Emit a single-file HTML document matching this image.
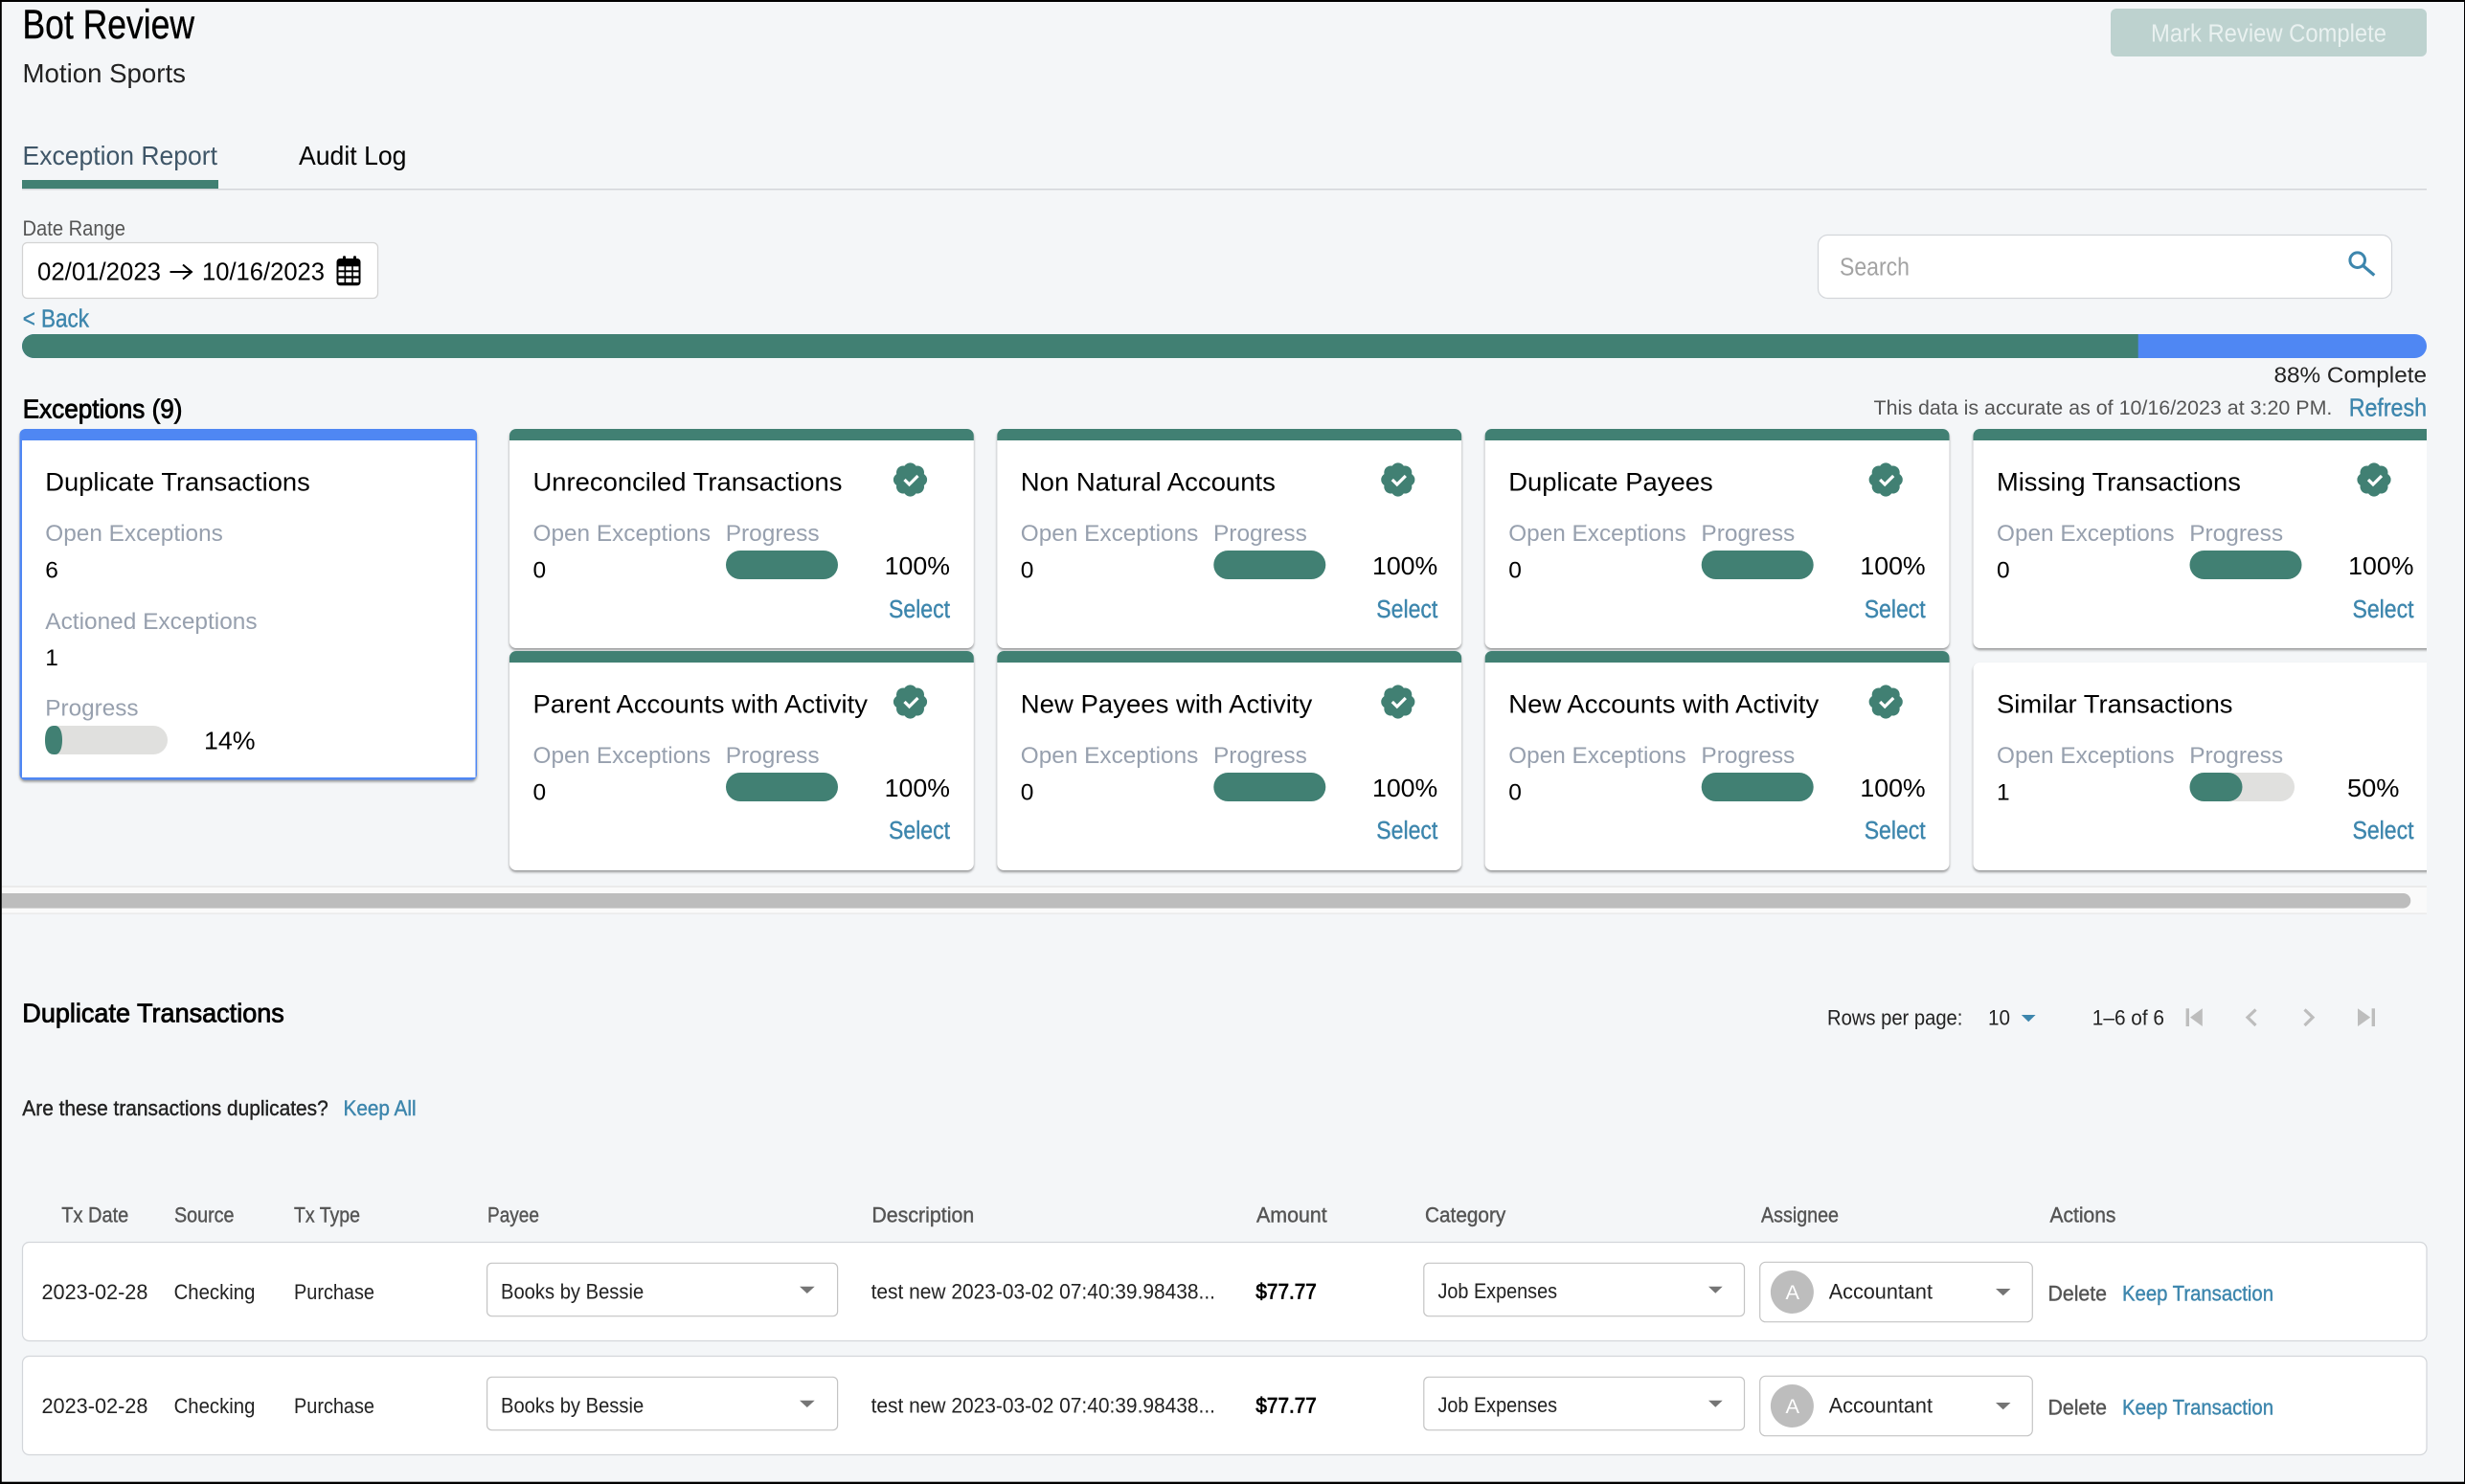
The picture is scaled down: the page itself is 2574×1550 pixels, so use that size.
<!DOCTYPE html>
<html lang="en">
<head>
<meta charset="utf-8">
<title>Bot Review</title>
<style>
html,body{margin:0;padding:0;background:#f4f6f8;width:2574px;height:1550px;overflow:hidden}
svg{display:block}
text{font-family:"Liberation Sans",Arial,sans-serif;fill:currentColor;white-space:pre}
.m{stroke:currentColor;stroke-width:.4}
.b{stroke:currentColor;stroke-width:.8}
.k{color:#000}.d{color:#222}.g{color:#555}.l{color:#3d86ad}.o{color:#97a0ae}
.cardshadow{filter:drop-shadow(0 2px 1.2px rgba(0,0,0,.38))}
.f26{font-size:24.5px}.f27{font-size:27px}.f25{font-size:25.5px}.f22{font-size:22.5px}
</style>
</head>
<body>
<svg xmlns="http://www.w3.org/2000/svg" width="2574" height="1550" viewBox="0 0 2574 1550">
<defs><clipPath id="cc"><rect x="0" y="0" width="2534" height="1550"/></clipPath></defs>
<rect width="2574" height="1550" fill="#f4f6f8"/>

<!-- header -->
<text x="23.5" y="40" class="k m" font-size="43" textLength="179.5" lengthAdjust="spacingAndGlyphs">Bot Review</text>
<text x="23.5" y="86" class="d" font-size="28" textLength="170.5" lengthAdjust="spacingAndGlyphs">Motion Sports</text>
<rect x="2204" y="9" width="330" height="50" rx="6" fill="#bdd2cf"/>
<text x="2246" y="43.3" font-size="25.5" style="color:#e9f1f0" textLength="246" lengthAdjust="spacingAndGlyphs">Mark Review Complete</text>

<!-- tabs -->
<text x="23.5" y="172" font-size="28" style="color:#3f5668" textLength="203.5" lengthAdjust="spacingAndGlyphs">Exception Report</text>
<text x="312" y="172" class="k" font-size="28" textLength="112.5" lengthAdjust="spacingAndGlyphs">Audit Log</text>
<rect x="23" y="197" width="2511" height="1.5" fill="#d3d6da"/>
<rect x="23" y="188" width="205" height="9" fill="#418073"/>

<!-- date range -->
<text x="23.5" y="246" class="g" font-size="22.5" textLength="107.5" lengthAdjust="spacingAndGlyphs">Date Range</text>
<rect x="23.5" y="253.5" width="371" height="58" rx="5" fill="#fff" stroke="#d3d3d3" stroke-width="1.2"/>
<text x="39" y="292.3" class="k" font-size="25.5" textLength="129" lengthAdjust="spacingAndGlyphs">02/01/2023</text>
<path d="M177.5 284H200M191 276.5L200 284L191 291.5" fill="none" stroke="#000" stroke-width="2"/>
<text x="211" y="292.3" class="k" font-size="25.5" textLength="128" lengthAdjust="spacingAndGlyphs">10/16/2023</text>
<!-- calendar -->
<rect x="351.5" y="270" width="25" height="28.3" rx="3.5" fill="#000"/>
<rect x="358" y="267.3" width="3" height="6" rx="1.2" fill="#000"/><rect x="369" y="267.3" width="3" height="6" rx="1.2" fill="#000"/>
<g fill="#fff" transform="translate(.5 0)">
<rect x="353" y="278.3" width="6" height="4"/><rect x="360.7" y="278.3" width="6" height="4"/><rect x="368.3" y="278.3" width="5.7" height="4"/>
<rect x="353" y="284.3" width="6" height="4"/><rect x="360.7" y="284.3" width="6" height="4"/><rect x="368.3" y="284.3" width="5.7" height="4"/>
<rect x="353" y="290.7" width="6" height="4.3"/><rect x="360.7" y="290.7" width="6" height="4.3"/><rect x="368.3" y="290.7" width="5.7" height="4.3"/>
</g>

<!-- search -->
<rect x="1898.5" y="245.5" width="599" height="66" rx="10" fill="#fff" stroke="#d3d6da" stroke-width="1.2"/>
<text x="1921" y="287.3" font-size="25.5" style="color:#a3a3a3" textLength="73" lengthAdjust="spacingAndGlyphs">Search</text>
<circle cx="2461.7" cy="271.7" r="7.8" fill="none" stroke="#3d86ad" stroke-width="3"/>
<path d="M2467.5 277.5L2479.3 287.5" stroke="#3d86ad" stroke-width="3.2" fill="none"/>

<text x="23.7" y="341.3" class="l m" font-size="25.5" textLength="69.3" lengthAdjust="spacingAndGlyphs">&lt; Back</text>

<!-- overall progress -->
<rect x="23" y="349" width="2511" height="25" rx="12.5" fill="#4f87f3"/>
<path d="M2232.7 349H35.5a12.5 12.5 0 0 0 0 25H2232.7Z" fill="#418073"/>
<text x="2374.5" y="399.5" class="d" font-size="23.5" textLength="159.5" lengthAdjust="spacingAndGlyphs">88% Complete</text>

<text x="23.7" y="436.5" class="k b" font-size="28" textLength="166.8" lengthAdjust="spacingAndGlyphs">Exceptions (9)</text>
<text x="1956.5" y="432.8" class="g" font-size="21.5" textLength="478.9" lengthAdjust="spacingAndGlyphs">This data is accurate as of 10/16/2023 at 3:20 PM.</text>
<text x="2452.7" y="434.3" class="l m" font-size="26" textLength="81.3" lengthAdjust="spacingAndGlyphs">Refresh</text>

<!-- selected card -->
<g class="cardshadow">
<rect x="20.5" y="448" width="477.5" height="366.6" rx="6" fill="#4f87f3"/>
</g>
<rect x="23" y="460" width="473.5" height="352" fill="#fff"/>
<text x="47.3" y="512.6" class="k f27" textLength="276.5" lengthAdjust="spacingAndGlyphs">Duplicate Transactions</text>
<text x="47.3" y="565" class="o f26" textLength="185.5" lengthAdjust="spacingAndGlyphs">Open Exceptions</text>
<text x="47.3" y="603.5" class="k f26">6</text>
<text x="47.3" y="657" class="o f26" textLength="221.3" lengthAdjust="spacingAndGlyphs">Actioned Exceptions</text>
<text x="47.3" y="695" class="k f26">1</text>
<text x="47.3" y="747.5" class="o f26" textLength="97.3" lengthAdjust="spacingAndGlyphs">Progress</text>
<rect x="47" y="758" width="128" height="30" rx="15" fill="#e0e0de"/>
<path d="M56 758H58C62 758 65 764 65 773C65 782 62 788 58 788H56C50 788 47 782 47 773C47 764 50 758 56 758Z" fill="#418073"/>
<text x="213" y="782.6" class="k f25" textLength="53.6" lengthAdjust="spacingAndGlyphs">14%</text>

<g clip-path="url(#cc)">
<!-- card 1 -->
<g transform="translate(532 0)">
<g class="cardshadow"><rect x="0" y="448" width="484.8" height="229" rx="7" fill="#fff"/></g>
<path d="M0 460V455a7 7 0 0 1 7-7H477.8a7 7 0 0 1 7 7V460Z" fill="#418073"/>
<text x="24.5" y="512.6" class="k f27" textLength="323" lengthAdjust="spacingAndGlyphs">Unreconciled Transactions</text>
<g transform="translate(418.5 501)"><path d="M14.32-5.93A7 7 0 0 1 14.32 5.93A7 7 0 0 1 5.93 14.32A7 7 0 0 1-5.93 14.32A7 7 0 0 1-14.32 5.93A7 7 0 0 1-14.32-5.93A7 7 0 0 1-5.93-14.32A7 7 0 0 1 5.93-14.32A7 7 0 0 1 14.32-5.93Z" fill="#418073"/><path d="M-6 0L-1 5L8-4" fill="none" stroke="#fff" stroke-width="3.2"/></g>
<text x="24.5" y="565" class="o f26" textLength="185.5" lengthAdjust="spacingAndGlyphs">Open Exceptions</text>
<text x="225.7" y="565" class="o f26" textLength="97.9" lengthAdjust="spacingAndGlyphs">Progress</text>
<text x="24.5" y="603.5" class="k f26">0</text>
<rect x="226" y="575" width="117" height="30" rx="15" fill="#418073"/>
<text x="391.7" y="600" class="k f25" textLength="68.3" lengthAdjust="spacingAndGlyphs">100%</text>
<text x="396" y="645" class="l m f25" textLength="64" lengthAdjust="spacingAndGlyphs">Select</text>
</g>
<!-- card 2 -->
<g transform="translate(1041.3 0)">
<g class="cardshadow"><rect x="0" y="448" width="484.8" height="229" rx="7" fill="#fff"/></g>
<path d="M0 460V455a7 7 0 0 1 7-7H477.8a7 7 0 0 1 7 7V460Z" fill="#418073"/>
<text x="24.5" y="512.6" class="k f27" textLength="266.1" lengthAdjust="spacingAndGlyphs">Non Natural Accounts</text>
<g transform="translate(418.5 501)"><path d="M14.32-5.93A7 7 0 0 1 14.32 5.93A7 7 0 0 1 5.93 14.32A7 7 0 0 1-5.93 14.32A7 7 0 0 1-14.32 5.93A7 7 0 0 1-14.32-5.93A7 7 0 0 1-5.93-14.32A7 7 0 0 1 5.93-14.32A7 7 0 0 1 14.32-5.93Z" fill="#418073"/><path d="M-6 0L-1 5L8-4" fill="none" stroke="#fff" stroke-width="3.2"/></g>
<text x="24.5" y="565" class="o f26" textLength="185.5" lengthAdjust="spacingAndGlyphs">Open Exceptions</text>
<text x="225.7" y="565" class="o f26" textLength="97.9" lengthAdjust="spacingAndGlyphs">Progress</text>
<text x="24.5" y="603.5" class="k f26">0</text>
<rect x="226" y="575" width="117" height="30" rx="15" fill="#418073"/>
<text x="391.7" y="600" class="k f25" textLength="68.3" lengthAdjust="spacingAndGlyphs">100%</text>
<text x="396" y="645" class="l m f25" textLength="64" lengthAdjust="spacingAndGlyphs">Select</text>
</g>
<!-- card 3 -->
<g transform="translate(1550.7 0)">
<g class="cardshadow"><rect x="0" y="448" width="484.8" height="229" rx="7" fill="#fff"/></g>
<path d="M0 460V455a7 7 0 0 1 7-7H477.8a7 7 0 0 1 7 7V460Z" fill="#418073"/>
<text x="24.5" y="512.6" class="k f27" textLength="213.5" lengthAdjust="spacingAndGlyphs">Duplicate Payees</text>
<g transform="translate(418.5 501)"><path d="M14.32-5.93A7 7 0 0 1 14.32 5.93A7 7 0 0 1 5.93 14.32A7 7 0 0 1-5.93 14.32A7 7 0 0 1-14.32 5.93A7 7 0 0 1-14.32-5.93A7 7 0 0 1-5.93-14.32A7 7 0 0 1 5.93-14.32A7 7 0 0 1 14.32-5.93Z" fill="#418073"/><path d="M-6 0L-1 5L8-4" fill="none" stroke="#fff" stroke-width="3.2"/></g>
<text x="24.5" y="565" class="o f26" textLength="185.5" lengthAdjust="spacingAndGlyphs">Open Exceptions</text>
<text x="225.7" y="565" class="o f26" textLength="97.9" lengthAdjust="spacingAndGlyphs">Progress</text>
<text x="24.5" y="603.5" class="k f26">0</text>
<rect x="226" y="575" width="117" height="30" rx="15" fill="#418073"/>
<text x="391.7" y="600" class="k f25" textLength="68.3" lengthAdjust="spacingAndGlyphs">100%</text>
<text x="396" y="645" class="l m f25" textLength="64" lengthAdjust="spacingAndGlyphs">Select</text>
</g>
<!-- card 4 -->
<g transform="translate(2060.5 0)">
<g class="cardshadow"><rect x="0" y="448" width="484.8" height="229" rx="7" fill="#fff"/></g>
<path d="M0 460V455a7 7 0 0 1 7-7H477.8a7 7 0 0 1 7 7V460Z" fill="#418073"/>
<text x="24.5" y="512.6" class="k f27" textLength="254.9" lengthAdjust="spacingAndGlyphs">Missing Transactions</text>
<g transform="translate(418.5 501)"><path d="M14.32-5.93A7 7 0 0 1 14.32 5.93A7 7 0 0 1 5.93 14.32A7 7 0 0 1-5.93 14.32A7 7 0 0 1-14.32 5.93A7 7 0 0 1-14.32-5.93A7 7 0 0 1-5.93-14.32A7 7 0 0 1 5.93-14.32A7 7 0 0 1 14.32-5.93Z" fill="#418073"/><path d="M-6 0L-1 5L8-4" fill="none" stroke="#fff" stroke-width="3.2"/></g>
<text x="24.5" y="565" class="o f26" textLength="185.5" lengthAdjust="spacingAndGlyphs">Open Exceptions</text>
<text x="225.7" y="565" class="o f26" textLength="97.9" lengthAdjust="spacingAndGlyphs">Progress</text>
<text x="24.5" y="603.5" class="k f26">0</text>
<rect x="226" y="575" width="117" height="30" rx="15" fill="#418073"/>
<text x="391.7" y="600" class="k f25" textLength="68.3" lengthAdjust="spacingAndGlyphs">100%</text>
<text x="396" y="645" class="l m f25" textLength="64" lengthAdjust="spacingAndGlyphs">Select</text>
</g>
<!-- card 5 -->
<g transform="translate(532 232)">
<g class="cardshadow"><rect x="0" y="448" width="484.8" height="229" rx="7" fill="#fff"/></g>
<path d="M0 460V455a7 7 0 0 1 7-7H477.8a7 7 0 0 1 7 7V460Z" fill="#418073"/>
<text x="24.5" y="512.6" class="k f27" textLength="349.5" lengthAdjust="spacingAndGlyphs">Parent Accounts with Activity</text>
<g transform="translate(418.5 501)"><path d="M14.32-5.93A7 7 0 0 1 14.32 5.93A7 7 0 0 1 5.93 14.32A7 7 0 0 1-5.93 14.32A7 7 0 0 1-14.32 5.93A7 7 0 0 1-14.32-5.93A7 7 0 0 1-5.93-14.32A7 7 0 0 1 5.93-14.32A7 7 0 0 1 14.32-5.93Z" fill="#418073"/><path d="M-6 0L-1 5L8-4" fill="none" stroke="#fff" stroke-width="3.2"/></g>
<text x="24.5" y="565" class="o f26" textLength="185.5" lengthAdjust="spacingAndGlyphs">Open Exceptions</text>
<text x="225.7" y="565" class="o f26" textLength="97.9" lengthAdjust="spacingAndGlyphs">Progress</text>
<text x="24.5" y="603.5" class="k f26">0</text>
<rect x="226" y="575" width="117" height="30" rx="15" fill="#418073"/>
<text x="391.7" y="600" class="k f25" textLength="68.3" lengthAdjust="spacingAndGlyphs">100%</text>
<text x="396" y="644" class="l m f25" textLength="64" lengthAdjust="spacingAndGlyphs">Select</text>
</g>
<!-- card 6 -->
<g transform="translate(1041.3 232)">
<g class="cardshadow"><rect x="0" y="448" width="484.8" height="229" rx="7" fill="#fff"/></g>
<path d="M0 460V455a7 7 0 0 1 7-7H477.8a7 7 0 0 1 7 7V460Z" fill="#418073"/>
<text x="24.5" y="512.6" class="k f27" textLength="304.5" lengthAdjust="spacingAndGlyphs">New Payees with Activity</text>
<g transform="translate(418.5 501)"><path d="M14.32-5.93A7 7 0 0 1 14.32 5.93A7 7 0 0 1 5.93 14.32A7 7 0 0 1-5.93 14.32A7 7 0 0 1-14.32 5.93A7 7 0 0 1-14.32-5.93A7 7 0 0 1-5.93-14.32A7 7 0 0 1 5.93-14.32A7 7 0 0 1 14.32-5.93Z" fill="#418073"/><path d="M-6 0L-1 5L8-4" fill="none" stroke="#fff" stroke-width="3.2"/></g>
<text x="24.5" y="565" class="o f26" textLength="185.5" lengthAdjust="spacingAndGlyphs">Open Exceptions</text>
<text x="225.7" y="565" class="o f26" textLength="97.9" lengthAdjust="spacingAndGlyphs">Progress</text>
<text x="24.5" y="603.5" class="k f26">0</text>
<rect x="226" y="575" width="117" height="30" rx="15" fill="#418073"/>
<text x="391.7" y="600" class="k f25" textLength="68.3" lengthAdjust="spacingAndGlyphs">100%</text>
<text x="396" y="644" class="l m f25" textLength="64" lengthAdjust="spacingAndGlyphs">Select</text>
</g>
<!-- card 7 -->
<g transform="translate(1550.7 232)">
<g class="cardshadow"><rect x="0" y="448" width="484.8" height="229" rx="7" fill="#fff"/></g>
<path d="M0 460V455a7 7 0 0 1 7-7H477.8a7 7 0 0 1 7 7V460Z" fill="#418073"/>
<text x="24.5" y="512.6" class="k f27" textLength="324.1" lengthAdjust="spacingAndGlyphs">New Accounts with Activity</text>
<g transform="translate(418.5 501)"><path d="M14.32-5.93A7 7 0 0 1 14.32 5.93A7 7 0 0 1 5.93 14.32A7 7 0 0 1-5.93 14.32A7 7 0 0 1-14.32 5.93A7 7 0 0 1-14.32-5.93A7 7 0 0 1-5.93-14.32A7 7 0 0 1 5.93-14.32A7 7 0 0 1 14.32-5.93Z" fill="#418073"/><path d="M-6 0L-1 5L8-4" fill="none" stroke="#fff" stroke-width="3.2"/></g>
<text x="24.5" y="565" class="o f26" textLength="185.5" lengthAdjust="spacingAndGlyphs">Open Exceptions</text>
<text x="225.7" y="565" class="o f26" textLength="97.9" lengthAdjust="spacingAndGlyphs">Progress</text>
<text x="24.5" y="603.5" class="k f26">0</text>
<rect x="226" y="575" width="117" height="30" rx="15" fill="#418073"/>
<text x="391.7" y="600" class="k f25" textLength="68.3" lengthAdjust="spacingAndGlyphs">100%</text>
<text x="396" y="644" class="l m f25" textLength="64" lengthAdjust="spacingAndGlyphs">Select</text>
</g>
<!-- card 8 -->
<g transform="translate(2060.5 232)">
<g class="cardshadow"><rect x="0" y="460" width="484.8" height="217" rx="7" fill="#fff"/></g>
<text x="24.5" y="512.6" class="k f27" textLength="246.5" lengthAdjust="spacingAndGlyphs">Similar Transactions</text>
<text x="24.5" y="565" class="o f26" textLength="185.5" lengthAdjust="spacingAndGlyphs">Open Exceptions</text>
<text x="225.7" y="565" class="o f26" textLength="97.9" lengthAdjust="spacingAndGlyphs">Progress</text>
<text x="24.5" y="603.5" class="k f26">1</text>
<rect x="226" y="575" width="109.5" height="30" rx="15" fill="#e0e0de"/>
<rect x="226" y="575" width="55" height="30" rx="15" fill="#418073"/>
<text x="390.5" y="600" class="k f25" textLength="54.5" lengthAdjust="spacingAndGlyphs">50%</text>
<text x="396" y="644" class="l m f25" textLength="64" lengthAdjust="spacingAndGlyphs">Select</text>
</g>
</g>

<!-- horizontal scrollbar -->
<rect x="2" y="925" width="2532" height="30" fill="#fafafa"/>
<rect x="2" y="925" width="2532" height="2" fill="#ebebeb"/>
<rect x="2" y="953.4" width="2532" height="1.6" fill="#ebebeb"/>
<path d="M2 933H2509.5a7.8 7.8 0 0 1 0 15.6H2Z" fill="#bdbdbd"/>

<!-- section head -->
<text x="23.3" y="1067.7" class="k b" font-size="27.5" textLength="273.5" lengthAdjust="spacingAndGlyphs">Duplicate Transactions</text>
<text x="1908" y="1070.7" class="d" font-size="22.5" textLength="141.4" lengthAdjust="spacingAndGlyphs">Rows per page:</text>
<text x="2076" y="1070.7" class="d" font-size="22.5" textLength="23" lengthAdjust="spacingAndGlyphs">10</text>
<path d="M2110.8 1060H2125.6L2118.2 1067.3Z" fill="#3d86ad"/>
<text x="2184.8" y="1070.7" class="d" font-size="22.5" textLength="75.2" lengthAdjust="spacingAndGlyphs">1–6 of 6</text>
<g fill="#bdbdbd">
<rect x="2282.6" y="1053.3" width="3.4" height="18.7"/><path d="M2299.8 1053.3V1072L2287 1062.6Z"/>
<rect x="2476.6" y="1053.3" width="3.4" height="18.7"/><path d="M2462 1053.3V1072L2475.2 1062.6Z"/>
</g>
<path d="M2355.5 1054.5L2347 1062.6L2355.5 1071" fill="none" stroke="#bdbdbd" stroke-width="3.2"/>
<path d="M2406.5 1054.5L2415 1062.6L2406.5 1071" fill="none" stroke="#bdbdbd" stroke-width="3.2"/>

<text x="23.3" y="1164.9" class="d m" font-size="22.5" textLength="319.4" lengthAdjust="spacingAndGlyphs">Are these transactions duplicates?</text>
<text x="358.5" y="1165" class="l m" font-size="22.5" textLength="76.1" lengthAdjust="spacingAndGlyphs">Keep All</text>

<!-- table head -->
<g class="g m" font-size="22">
<text x="64.3" y="1276.5" textLength="70" lengthAdjust="spacingAndGlyphs">Tx Date</text>
<text x="182" y="1276.5" textLength="62.5" lengthAdjust="spacingAndGlyphs">Source</text>
<text x="307" y="1276.5" textLength="69" lengthAdjust="spacingAndGlyphs">Tx Type</text>
<text x="509" y="1276.5" textLength="54" lengthAdjust="spacingAndGlyphs">Payee</text>
<text x="910.4" y="1276.5" textLength="106.8" lengthAdjust="spacingAndGlyphs">Description</text>
<text x="1312" y="1276.5" textLength="73.7" lengthAdjust="spacingAndGlyphs">Amount</text>
<text x="1488" y="1276.5" textLength="84.3" lengthAdjust="spacingAndGlyphs">Category</text>
<text x="1839" y="1276.5" textLength="81" lengthAdjust="spacingAndGlyphs">Assignee</text>
<text x="2140.5" y="1276.5" textLength="68.9" lengthAdjust="spacingAndGlyphs">Actions</text>
</g>

<!-- row 1 -->
<g>
<rect x="23.5" y="1297.5" width="2510.5" height="103" rx="7" fill="#fff" stroke="#d3d6da" stroke-width="1.2"/>
<text x="43.5" y="1357" class="d" font-size="22.5" textLength="110.9" lengthAdjust="spacingAndGlyphs">2023-02-28</text>
<text x="181.6" y="1357" class="d" font-size="22.5" textLength="84.8" lengthAdjust="spacingAndGlyphs">Checking</text>
<text x="307" y="1357" class="d" font-size="22.5" textLength="84" lengthAdjust="spacingAndGlyphs">Purchase</text>
<rect x="508.6" y="1319.3" width="366" height="55.4" rx="5" fill="#fff" stroke="#c4c4c4" stroke-width="1.2"/>
<text x="523" y="1356.4" class="d" font-size="22.5" textLength="149.2" lengthAdjust="spacingAndGlyphs">Books by Bessie</text>
<path d="M835 1343.7H850.7L842.8 1351Z" fill="#757575"/>
<text x="909.6" y="1356.7" class="d" font-size="22.5" textLength="359.4" lengthAdjust="spacingAndGlyphs">test new 2023-03-02 07:40:39.98438...</text>
<text x="1311.4" y="1356.7" class="k b" font-size="22.5" textLength="63.4" lengthAdjust="spacingAndGlyphs">$77.77</text>
<rect x="1486.8" y="1319.3" width="334.7" height="55.4" rx="5" fill="#fff" stroke="#c4c4c4" stroke-width="1.2"/>
<text x="1501.5" y="1356" class="d" font-size="22.5" textLength="124.5" lengthAdjust="spacingAndGlyphs">Job Expenses</text>
<path d="M1784 1343.7H1798.7L1791.3 1350.7Z" fill="#757575"/>
<rect x="1837.7" y="1318.3" width="284.6" height="62.4" rx="6" fill="#fff" stroke="#c4c4c4" stroke-width="1.2"/>
<circle cx="1871.4" cy="1349.5" r="22.5" fill="#bdbdbd"/>
<text x="1864.5" y="1357" font-size="21.5" style="color:#fff" textLength="14.5" lengthAdjust="spacingAndGlyphs">A</text>
<text x="1909.7" y="1356.7" class="d" font-size="22.5" textLength="108.3" lengthAdjust="spacingAndGlyphs">Accountant</text>
<path d="M2084 1346H2099.5L2091.7 1353.3Z" fill="#757575"/>
<text x="2138.5" y="1358.3" class="g m" font-size="22.5" textLength="61.5" lengthAdjust="spacingAndGlyphs">Delete</text>
<text x="2216" y="1358.3" class="l m" font-size="22.5" textLength="158" lengthAdjust="spacingAndGlyphs">Keep Transaction</text>
</g>
<!-- row 2 -->
<g transform="translate(0 119)">
<rect x="23.5" y="1297.5" width="2510.5" height="103" rx="7" fill="#fff" stroke="#d3d6da" stroke-width="1.2"/>
<text x="43.5" y="1357" class="d" font-size="22.5" textLength="110.9" lengthAdjust="spacingAndGlyphs">2023-02-28</text>
<text x="181.6" y="1357" class="d" font-size="22.5" textLength="84.8" lengthAdjust="spacingAndGlyphs">Checking</text>
<text x="307" y="1357" class="d" font-size="22.5" textLength="84" lengthAdjust="spacingAndGlyphs">Purchase</text>
<rect x="508.6" y="1319.3" width="366" height="55.4" rx="5" fill="#fff" stroke="#c4c4c4" stroke-width="1.2"/>
<text x="523" y="1356.4" class="d" font-size="22.5" textLength="149.2" lengthAdjust="spacingAndGlyphs">Books by Bessie</text>
<path d="M835 1343.7H850.7L842.8 1351Z" fill="#757575"/>
<text x="909.6" y="1356.7" class="d" font-size="22.5" textLength="359.4" lengthAdjust="spacingAndGlyphs">test new 2023-03-02 07:40:39.98438...</text>
<text x="1311.4" y="1356.7" class="k b" font-size="22.5" textLength="63.4" lengthAdjust="spacingAndGlyphs">$77.77</text>
<rect x="1486.8" y="1319.3" width="334.7" height="55.4" rx="5" fill="#fff" stroke="#c4c4c4" stroke-width="1.2"/>
<text x="1501.5" y="1356" class="d" font-size="22.5" textLength="124.5" lengthAdjust="spacingAndGlyphs">Job Expenses</text>
<path d="M1784 1343.7H1798.7L1791.3 1350.7Z" fill="#757575"/>
<rect x="1837.7" y="1318.3" width="284.6" height="62.4" rx="6" fill="#fff" stroke="#c4c4c4" stroke-width="1.2"/>
<circle cx="1871.4" cy="1349.5" r="22.5" fill="#bdbdbd"/>
<text x="1864.5" y="1357" font-size="21.5" style="color:#fff" textLength="14.5" lengthAdjust="spacingAndGlyphs">A</text>
<text x="1909.7" y="1356.7" class="d" font-size="22.5" textLength="108.3" lengthAdjust="spacingAndGlyphs">Accountant</text>
<path d="M2084 1346H2099.5L2091.7 1353.3Z" fill="#757575"/>
<text x="2138.5" y="1358.3" class="g m" font-size="22.5" textLength="61.5" lengthAdjust="spacingAndGlyphs">Delete</text>
<text x="2216" y="1358.3" class="l m" font-size="22.5" textLength="158" lengthAdjust="spacingAndGlyphs">Keep Transaction</text>
</g>

<!-- screenshot frame -->
<rect x="0" y="0" width="2574" height="2" fill="#000"/>
<rect x="0" y="0" width="1.8" height="1550" fill="#000"/>
<rect x="0" y="1547.7" width="2574" height="2.3" fill="#000"/>
<rect x="2573" y="0" width="1" height="1550" fill="#000"/>
</svg>
</body>
</html>
